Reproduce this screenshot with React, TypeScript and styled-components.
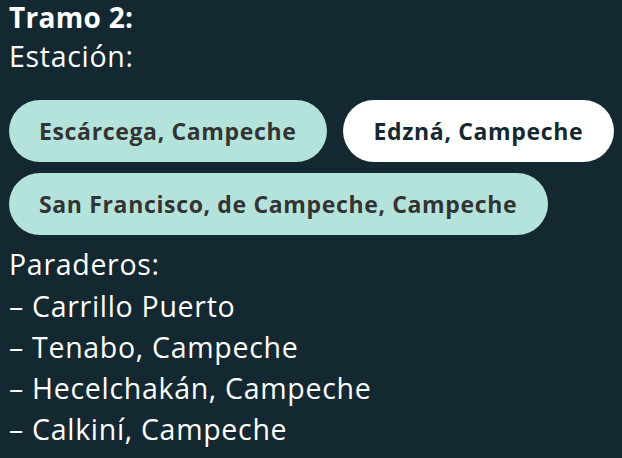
import React from "react";
import styled, { createGlobalStyle } from "styled-components";

const Global = createGlobalStyle`
  html, body { margin: 0; padding: 0; background: #132830; }
  body { font-family: "Open Sans", "DejaVu Sans", sans-serif; }
`;

const Page = styled.div`
  width: 622px;
  height: 458px;
  box-sizing: border-box;
  background: #132830;
  color: #ffffff;
  padding: 0 0 0 9px;
  overflow: hidden;
`;

const Title = styled.div`
  font-weight: 700;
  font-size: 28px;
  line-height: 35px;
  letter-spacing: 0.3px;
  margin-bottom: 1px;
`;

const Line = styled.div`
  font-size: 28.5px;
  line-height: 41.3px;
  letter-spacing: 0.7px;
`;

const Stations = styled.div`
  display: flex;
  flex-wrap: wrap;
  gap: 11px 16px;
  margin: 22.7px 0 9.3px;
`;

const Pill = styled.div<{ $active?: boolean }>`
  height: 62px;
  box-sizing: border-box;
  padding: 0 31px 0 30px;
  display: flex;
  align-items: center;
  border-radius: 31px;
  font-weight: 700;
  font-size: 23px;
  letter-spacing: 0.65px;
  background: ${(p) => (p.$active ? "#ffffff" : "#b3e3da")};
  color: ${(p) => (p.$active ? "#132830" : "#333333")};
`;

export default function App() {
  return (
    <Page>
      <Global />
      <Title>Tramo 2:</Title>
      <Line>Estación:</Line>
      <Stations>
        <Pill>Escárcega, Campeche</Pill>
        <Pill $active>Edzná, Campeche</Pill>
        <Pill>San Francisco, de Campeche, Campeche</Pill>
      </Stations>
      <Line>Paraderos:</Line>
      <Line>– Carrillo Puerto</Line>
      <Line>– Tenabo, Campeche</Line>
      <Line>– Hecelchakán, Campeche</Line>
      <Line>– Calkiní, Campeche</Line>
    </Page>
  );
}
